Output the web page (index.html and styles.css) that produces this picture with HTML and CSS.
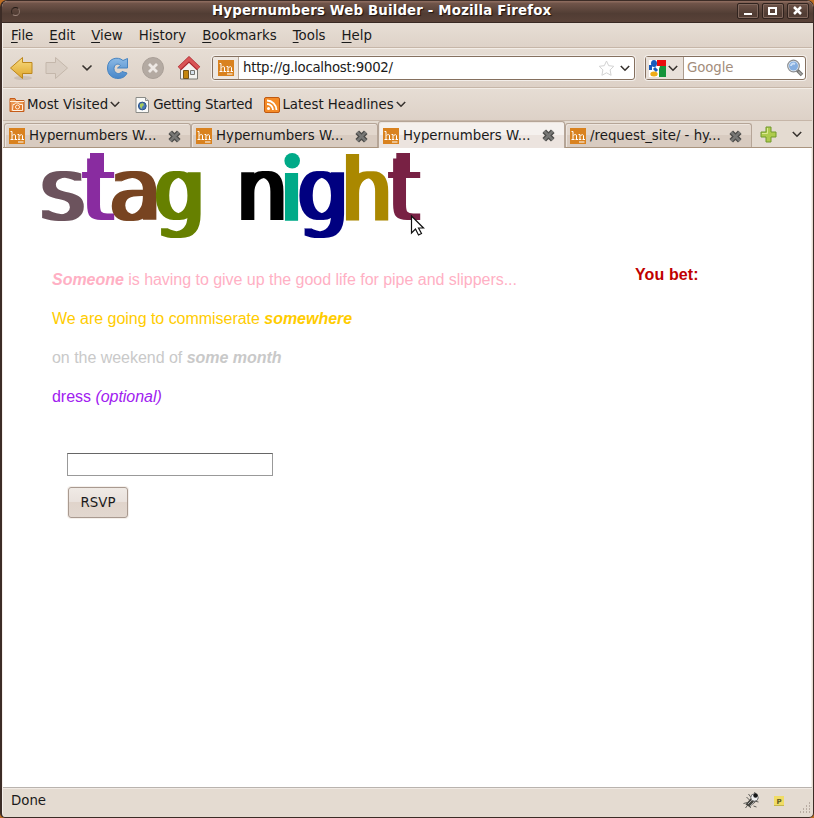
FILE: index.html
```html
<!DOCTYPE html>
<html lang="en">
<head>
<meta charset="utf-8">
<title>Hypernumbers Web Builder</title>
<link rel="stylesheet" href="styles.css">
</head>
<body>
<svg class="defs" width="0" height="0" aria-hidden="true">
  <defs>
    <linearGradient id="gold" x2="0" y2="1"><stop stop-color="#f8dc83"/><stop offset="1" stop-color="#dea52a"/></linearGradient>
    <linearGradient id="blue" x2="0" y2="1"><stop stop-color="#8bb9e5"/><stop offset="1" stop-color="#4887c9"/></linearGradient>
    <symbol id="chev" viewBox="0 0 10 7"><path d="M.8 1 5 5.2 9.2 1" fill="none" stroke="#38332f" stroke-width="1.6"/></symbol>
    <symbol id="hn" viewBox="0 0 16 16"><path fill="#d9821f" d="M0 0h16v16H0z"/><path d="M1.500 3.500H3V11.500M1.500 11.500h3M3.500 7.500C5 6 6.500 6 6.500 8v3.500M5.500 11.500h2.500M8.500 6.500H10v5M8.800 11.500h2.500M10.500 8c1.500-2 3-1.700 3 0v3.500M12.500 11.500h2.500M9 14h5.500" stroke="#fff" fill="none"/></symbol>
    <symbol id="close" viewBox="0 0 14 14"><path d="m3 3 8 8M11 3l-8 8" stroke="#4b4b49" stroke-width="4.800"/><path d="m3 3 8 8M11 3l-8 8" stroke="#777775" stroke-width="2.400"/></symbol>
  </defs>
</svg>
<div class="window">
  <header class="titlebar">
    <i class="bead"></i>
    <h1>Hypernumbers Web Builder - Mozilla Firefox</h1>
    <div class="controls">
      <span><svg width="20" height="16"><path d="M6 10h8v2H6z" fill="#fff"/></svg></span>
      <span><svg width="20" height="16"><path d="M6 5h7v6H6z" fill="none" stroke="#fff" stroke-width="2"/></svg></span>
      <span><svg width="20" height="16"><path d="m6 4 7 7M13 4l-7 7" stroke="#fff" stroke-width="2.500"/></svg></span>
    </div>
  </header>
  <nav class="menubar">
    <span><u>F</u>ile</span><span><u>E</u>dit</span><span><u>V</u>iew</span><span>Hi<u>s</u>tory</span><span><u>B</u>ookmarks</span><span><u>T</u>ools</span><span><u>H</u>elp</span>
  </nav>
  <div class="toolbar">
    <svg class="nav" width="206" height="38" viewBox="3 49 206 38">
      <ellipse cx="23" cy="78" rx="9" ry="2" fill="#b9aca0" opacity=".5"/>
      <path d="M10.500 68 22.500 57.500V62.500H32v11h-9.500v5z" fill="url(#gold)" stroke="#bd871c"/>
      <path d="M67.500 68 55.500 57.500V62.500H46v11h9.500v5z" fill="#d9cec4" stroke="#c4b7ab"/>
      <path d="m82.500 65.500 4.500 4.300 4.500-4.300" fill="none" stroke="#38332f" stroke-width="1.600"/>
      <path d="M123 60.500C118 56 107.500 58 107.500 68c0 13 17 13 19.500 5l-5-1.500c-2 3.500-8 2.500-8-3 0-4.500 4.500-5.500 6.500-3L117.500 68h10v-9.500z" fill="url(#blue)" stroke="#4784c1"/>
      <circle cx="153" cy="68" r="10.500" fill="#b4aaa2" stroke="#aaa098"/>
      <path d="m149 64 8 8M157 64l-8 8" stroke="#ede8e4" stroke-width="2.800"/>
      <path d="M180.500 67v12h17V67L189 60z" fill="#f4f3f0" stroke="#777671"/>
      <path d="M183.500 70.500h5v8h-5z" fill="#c4850e" stroke="#765517"/>
      <path d="M190.500 70.500h4v4h-4z" fill="#d5e1ec" stroke="#777671"/>
      <path d="m179.500 68.500 9.500-9 9.500 9" fill="none" stroke="#a9252d" stroke-width="5"/>
      <path d="m179.500 68 9.500-9 9.500 9" fill="none" stroke="#d95456" stroke-width="3.200"/>
    </svg>
    <div class="field address">
      <div class="site"><svg width="16" height="16"><use href="#hn"/></svg></div>
      <span class="url">http://g.localhost:9002/</span>
      <svg class="star" width="17" height="17" viewBox="0 0 17 17"><path d="m8.500 1 2.200 4.700 5.100.6-3.700 3.600 1 5.400-4.600-2.500-4.600 2.500 1-5.400L1.200 6.300l5.100-.6z" fill="#fff" stroke="#d2d2d2"/></svg>
      <svg width="10" height="7"><use href="#chev"/></svg>
    </div>
    <div class="field search">
      <div class="engine">
        <svg width="17" height="17" viewBox="0 0 17 17"><path fill="#fff" d="M0 0h17v17H0z"/><path fill="#e90d0d" d="M8 0h9v6H8z"/><path fill="#16943b" d="M11 6h6v11h-7V9z"/><path fill="#185bbd" d="M0 5h3v5H0z"/><ellipse cx="5" cy="3.500" rx="3" ry="3.500" fill="#185bbd"/><path d="m5 8 3 3" stroke="#185bbd" stroke-width="3"/><ellipse cx="5" cy="14" rx="3.700" ry="2.500" fill="#efac16"/></svg>
        <svg width="10" height="7"><use href="#chev"/></svg>
      </div>
      <span class="hint">Google</span>
      <svg width="18" height="18" viewBox="0 0 18 18"><path d="m10 10 6 6" stroke="#71716f" stroke-width="3.500"/><path d="m12.500 12.500 3 3" stroke="#aaa" stroke-width="1.500"/><circle cx="7.500" cy="7" r="5.800" fill="#e8eef3" stroke="#8b8e92" stroke-width="1.200"/><circle cx="7.500" cy="7" r="4.500" fill="#85aee0"/><path d="M5 7c0-2 2-3 4-2" stroke="#c9def5" stroke-width="2" fill="none"/></svg>
    </div>
  </div>
  <div class="bookmarks">
    <svg width="16" height="16" viewBox="0 0 16 16"><path d="M1 14.500V1.500h5l1 2h8v11z" fill="#e99652" stroke="#c55b18"/><path d="M1 4.500h14" stroke="#fff0dc"/><path d="M4 7.500h1.500l1-1.500h3l1 1.500h3v6H3.500z" fill="#e37c2c" stroke="#fff0df"/><circle cx="8.500" cy="10" r="2" fill="#e37c2c" stroke="#fff0df"/></svg>
    <span class="most">Most Visited</span><svg class="more" width="10" height="7"><use href="#chev"/></svg>
    <svg class="page" width="15" height="16" viewBox="0 0 15 16"><path d="M1 .5h9.500l3 3v12H1z" fill="#fafaf8" stroke="#8a8b87"/><path d="M10.500.5v3h3" fill="#ddd" stroke="#8a8b87"/><circle cx="7.300" cy="9" r="3.900" fill="#4878b6" stroke="#2e5387"/><path d="m5 7 3-1 1 2-2 2v2l-2-2z" fill="#a6c95c"/></svg>
    <span class="start">Getting Started</span>
    <svg class="feed" width="16" height="16" viewBox="0 0 16 16"><rect x=".5" y=".5" width="15" height="15" rx="1.500" fill="#f48a26" stroke="#bf5910"/><circle cx="4.500" cy="11.500" r="1.500" fill="#fff"/><path d="M3 7a6 6 0 0 1 6 6M3 3.500A9.500 9.500 0 0 1 12.500 13" fill="none" stroke="#fff" stroke-width="1.800"/></svg>
    <span class="latest">Latest Headlines</span><svg class="more" width="10" height="7"><use href="#chev"/></svg>
  </div>
  <div class="tabs">
    <div class="tab"><svg width="16" height="16"><use href="#hn"/></svg><span>Hypernumbers W...</span><svg width="15" height="15"><use href="#close"/></svg></div>
    <div class="tab"><svg width="16" height="16"><use href="#hn"/></svg><span>Hypernumbers W...</span><svg width="15" height="15"><use href="#close"/></svg></div>
    <div class="tab active"><svg width="16" height="16"><use href="#hn"/></svg><span>Hypernumbers W...</span><svg width="15" height="15"><use href="#close"/></svg></div>
    <div class="tab"><svg width="16" height="16"><use href="#hn"/></svg><span>/request_site/ - hy...</span><svg width="15" height="15"><use href="#close"/></svg></div>
    <svg class="plus" width="17" height="17" viewBox="0 0 17 17"><path d="M6 1h5v5h5v5h-5v5H6v-5H1V6h5z" fill="#aecb4d" stroke="#71992c"/><path d="M7.500 2v5.500H2" stroke="#dce995" fill="none"/></svg>
    <svg width="10" height="7"><use href="#chev"/></svg>
  </div>
  <main>
    <svg class="logo" width="430" height="95" viewBox="3 148 430 95">
      <clipPath id="stem"><path d="M-10-51H80V20H-10z"/></clipPath>
      <filter id="wide" x="-20%" width="140%" color-interpolation-filters="sRGB"><feMorphology operator="dilate" radius="3 0"/></filter>
      <g class="letters">
        <g filter="url(#wide)"><text transform="translate(40.400 220) scale(.97 1)" fill="#6c535d">s</text></g>
        <g filter="url(#wide)"><text transform="translate(83 220) scale(.87 1)" fill="#892ca0">t</text></g>
        <g filter="url(#wide)"><text transform="translate(109.800 220) scale(.95 1)" fill="#784421">a</text></g>
        <g filter="url(#wide)"><text transform="translate(154.600 220) scale(.9 1)" fill="#668000">g</text></g>
        <g filter="url(#wide)"><text transform="translate(237.100 220) scale(.9 1)" fill="#000">n</text></g>
        <g filter="url(#wide)"><text transform="translate(280.600 220) scale(.9 1)" fill="#00aa88" clip-path="url(#stem)">i</text></g>
        <g filter="url(#wide)"><text transform="translate(298.100 220) scale(.9 1)" fill="#000080">g</text></g>
        <g filter="url(#wide)"><text transform="translate(341.800 220) scale(.9 1)" fill="#aa8800">h</text></g>
        <g filter="url(#wide)"><text transform="translate(389 220) scale(.87 1)" fill="#782144">t</text></g>
      </g>
      <path d="M90 153h14v20H90z" fill="#892ca0"/><path d="M396.300 153h13.700v20h-13.700z" fill="#782144"/>
      <circle cx="292.200" cy="160.700" r="7.800" fill="#00aa88"/>
      <path d="M411.500 216v17l4-4 3 6 3-1.500-3-5.500h5z" fill="#fff" stroke="#111" stroke-width="1.200"/>
    </svg>
    <div class="columns">
      <section class="invite">
        <p class="pink"><b>Someone</b> is having to give up the good life for pipe and slippers...</p>
        <p class="yellow">We are going to commiserate <b>somewhere</b></p>
        <p class="gray">on the weekend of <b>some month</b></p>
        <p class="purple">dress <em>(optional)</em></p>
        <form><input type="text" aria-label="Reply"><button type="button">RSVP</button></form>
      </section>
      <h2>You bet:</h2>
    </div>
  </main>
  <footer>
    <span>Done</span>
    <svg width="71" height="28" viewBox="740 788 71 28">
      <path d="m742.500 803.500 4-1m-2 5.500 3-4m2 4-1-3m-3-8 3 3m-1-6 3 4m4-4-1-2m-1 14 3 1m-2-6 4 1m-2-4 2 0" stroke="#5c5c57"/>
      <path d="m744.500 804.500 5.500-6.500 5 3.500-6.500 5.500z" fill="#454540"/><path d="m747 804 4-4m-2 6 4-4" stroke="#aaa"/><circle cx="753.500" cy="797.500" r="3.700" fill="#eee" stroke="#777"/><circle cx="754.500" cy="795.500" r="2.200" fill="#171717"/>
      <path d="M773 796h10v10h-10z" fill="#f0dc65"/><path d="M773 805.500h10" stroke="#c5b64e"/><text x="775.500" y="804" class="pin">P</text>
      <path d="M808 803h1m-4 3h1m2 0h1m-7 3h1m2 0h1m2 0h1m-10 3h1m2 0h1m2 0h1m2 0h1" stroke="#aa9f94" stroke-width="1.300"/>
    </svg>
  </footer>
</div>
</body>
</html>
```

FILE: styles.css
```css
* { box-sizing: border-box; }
body { margin: 0; background: #be6e23; font: 13.333px/16px "DejaVu Sans", sans-serif; color: #1a1a1a; overflow: hidden; }
.defs { position: absolute; }
svg { display: block; flex: none; }
.window { width: 814px; height: 818px; display: grid; grid-template-rows: 22px 25px 40px 33px 27px 639px 30px; border: solid #3c2c26; border-width: 1px 1px 1px 2px; border-radius: 7px 7px 5px 5px; background: #e4dbd1; overflow: hidden; box-shadow: inset 1px 0 #f5efea; padding: 0 1px; }
.titlebar { margin: 0 -1px; display: flex; align-items: center; justify-content: space-between; background: linear-gradient(#8b6a5d 0 1px, #71554a 2px, #513d34 60%, #594238); border-bottom: 1px solid #382923; padding: 0 4px 1px 9px; }
.bead { width: 9px; height: 9px; border: 1px solid #8b756b; border-color: #231a16 #8b756b #9c857b #332620; border-radius: 50%; }
.titlebar h1 { margin: 0 auto 1px 192px; font: bold 13.333px/18px "DejaVu Sans", sans-serif; letter-spacing: .17px; color: #fff; text-shadow: 1px 1px 1px #1c120e; white-space: nowrap; }
.controls { display: flex; gap: 3px; }
.controls span { width: 22px; height: 16px; border: 1px solid #30231e; border-radius: 2px; box-shadow: inset 0 0 0 1px #80675c; }
.controls svg { margin-top: -1px; }
.menubar { display: flex; gap: 16px; align-items: center; padding: 1px 8px 0; border-bottom: 1px solid #c6b6a8; background: linear-gradient(#e7ded5, #ded2c8); }
.menubar u { text-underline-offset: 2px; text-decoration-thickness: 1px; }
.toolbar { display: flex; align-items: center; border-top: 1px solid #f3ede7; border-bottom: 1px solid #c6b6a8; background: linear-gradient(#e6ddd4, #ddd1c7); }
.field { height: 24px; display: flex; align-items: center; border: 1px solid #85705f; border-radius: 3px; background: #fff; box-shadow: 0 0 0 1px #f3eeea; }
.address { width: 423px; margin-left: 3px; padding-right: 4px; }
.site { display: flex; align-items: center; width: 26px; height: 22px; padding-left: 5px; background: #eee8e2; border-right: 1px solid #b7a799; border-radius: 2px 0 0 2px; }
.url { flex: 1; margin-left: 4px; letter-spacing: -.27px; }
.star { margin-right: 5px; }
.search { width: 161px; margin-left: 10px; padding-right: 1px; }
.engine { width: 38px; height: 22px; display: flex; align-items: center; gap: 2px; padding-left: 3px; background: #e9e1da; border-right: 1px solid #ac9c8e; }
.hint { flex: 1; margin-left: 3px; letter-spacing: -.1px; color: #a38d7b; }
.bookmarks { display: flex; align-items: center; padding: 0 0 0 6px; border-top: 1px solid #f3ede7; border-bottom: 1px solid #c6b6a8; background: linear-gradient(#e6ddd4, #ddd1c7); white-space: nowrap; }
.most { margin-left: 2px; }
.more { margin-left: 2px; }
.page { margin-left: 15px; }
.start { margin-left: 3px; letter-spacing: -.25px; }
.feed { margin-left: 12px; }
.latest { margin-left: 2px; }
.tabs { display: flex; align-items: flex-end; border-bottom: 1px solid #aa957f; padding-left: 1px; }
.tab { width: 187px; height: 24px; display: flex; align-items: center; padding: 1px 8px 0 4px; border: 1px solid #b5a597; border-bottom: 0; border-radius: 3px 3px 0 0; background: linear-gradient(#e2d7cd 0 48%, #d8cbc0 50% 100%); box-shadow: inset 1px 1px #ede5de; }
.tab span { flex: 1; margin-left: 4px; white-space: nowrap; }
.active { height: 27px; margin-bottom: -1px; background: linear-gradient(#f5f1ee 0 50%, #ece4df 50% 100%); padding-bottom: 0; }
.plus { margin: 0 15px 4px 8px; }
.plus + svg { margin-bottom: 9px; }
main { background: #fff; overflow: hidden; border-right: 1px solid #f5efea; }
.letters { font: 88px "DejaVu Sans", sans-serif; }
.columns { display: grid; grid-template-columns: 583px 1fr; padding: 27px 0 0 49px; font: 16px/19px "Liberation Sans", Arial, sans-serif; }
.invite p { margin: 0 0 20px; letter-spacing: -.03px; white-space: nowrap; }
.invite b { font-style: italic; }
.pink { color: #ffb0c4; }
.yellow { color: #ffcc00; }
.gray { color: #c9c9c9; }
.purple { color: #a020f0; }
.columns h2 { margin: -5px 0 0; font-size: 16px; line-height: 19px; letter-spacing: .1px; color: #c00000; }
form { display: flex; flex-direction: column; align-items: flex-start; margin: 47px 0 0 15px; }
input { width: 206px; height: 23px; border: 1px solid #999; border-top-color: #666; background: #fff; padding: 1px; }
button { width: 60px; height: 31px; margin: 11px 0 0 1px; padding: 0; border: 1px solid #a99a90; border-radius: 3px; background: linear-gradient(#f0eae5 0, #e9e1dc 48%, #e0d4cb 50%, #e2d7cf); box-shadow: 0 0 0 1px #f5f0ec; font: 13.333px/16px "DejaVu Sans", sans-serif; color: #1a1a1a; }
footer { display: flex; align-items: center; justify-content: space-between; padding-left: 8px; border-top: 1px solid #b9b3ae; box-shadow: inset 0 1px #f1eae4; }
footer span { margin-top: -4px; }
footer svg { margin-top: -1px; }
.pin { font: bold 7px "DejaVu Sans", sans-serif; fill: #625c24; }
```
